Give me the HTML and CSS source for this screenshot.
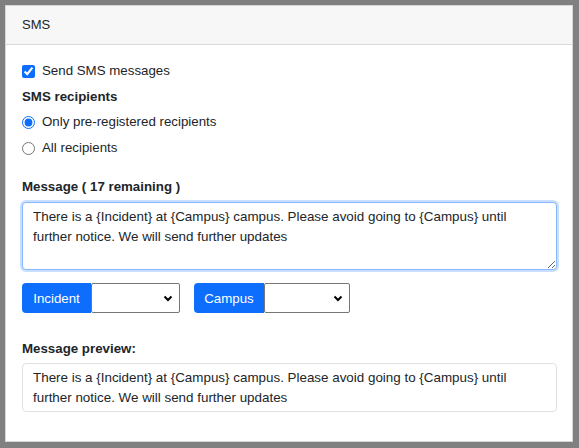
FILE: index.html
```html
<!DOCTYPE html>
<html>
	<head>
		<meta charset="utf-8">
		<title>SMS</title>
		<link rel="stylesheet" href="styles.css">
	</head>
	<body>
		<div class="card">
			<div class="card-header">SMS</div>
			<div class="card-body">
				<label class="check-row">
					<input type="checkbox" checked>
					<span>Send SMS messages</span>
				</label>
				<div class="label label-recipients">SMS recipients</div>
				<label class="check-row radio-first">
					<input type="radio" name="recipients" checked>
					<span>Only pre-registered recipients</span>
				</label>
				<label class="check-row radio-second">
					<input type="radio" name="recipients">
					<span>All recipients</span>
				</label>
				<div class="label label-message">Message ( 17 remaining )</div>
				<!-- textarea shown with the focus style -->
				<textarea class="message active">There is a {Incident} at {Campus} campus. Please avoid going to {Campus} until further notice. We will send further updates</textarea>
				<div class="tags">
					<div class="tag-group">
						<button class="tag-btn">Incident</button>
						<select class="tag-select"><option></option></select>
					</div>
					<div class="tag-group">
						<button class="tag-btn">Campus</button>
						<select class="tag-select"><option></option></select>
					</div>
				</div>
				<div class="label label-preview">Message preview:</div>
				<div class="preview">There is a {Incident} at {Campus} campus. Please avoid going to {Campus} until further notice. We will send further updates</div>
			</div>
		</div>
	</body>
</html>
```

FILE: styles.css
```css
*{
	margin: 0;
	padding: 0;
	box-sizing: border-box;
}
body{
	background-color: #808080;
	padding: 5px 6px 6px 5px;
	font-family: "Liberation Sans", Arial, sans-serif;
	font-size: 13.3px;
	color: #212529;
}
.card{
	background-color: #fff;
	border: 1px solid #d6d6d6;
	height: 437px;
}
.card-header{
	height: 39px;
	line-height: 38px;
	padding: 0 16px;
	background-color: #f7f7f8;
	border-bottom: 1px solid #d9d9d9;
	font-size: 13px;
}
.card-body{
	display: flex;
	flex-direction: column;
	padding: 16px 15px 0 16px;
}
.check-row{
	display: flex;
	align-items: center;
	height: 20px;
	line-height: 20px;
}
.check-row input{
	width: 13px;
	height: 13px;
	margin: 0 7px 0 0;
	accent-color: #0d6efd;
}
.label{
	font-weight: bold;
	height: 20px;
	line-height: 20px;
}
.label-recipients{
	margin-top: 6px;
}
.radio-first{
	margin-top: 5px;
}
.radio-second{
	margin-top: 6px;
}
.label-message{
	margin-top: 19px;
}
.message{
	margin-top: 5px;
	height: 68px;
	padding: 4px 10px;
	font-family: inherit;
	font-size: 13.4px;
	line-height: 19.5px;
	color: #212529;
	border: 1px solid #ced4da;
	border-radius: 4px;
	outline: none;
}
.message.active{
	border-color: #86b7fe;
	box-shadow: 0 0 0 2px rgba(13,110,253,.22);
}
.tags{
	display: flex;
	gap: 14px;
	margin-top: 13px;
}
.tag-group{
	display: flex;
	height: 30px;
}
.tag-btn{
	height: 30px;
	width: 69px;
	border: none;
	border-radius: 4px 0 0 4px;
	background-color: #0d6efd;
	color: #fff;
	font-family: inherit;
	font-size: 13.3px;
}
.tag-group:last-child .tag-btn{
	width: 70px;
}
.tag-select{
	appearance: none;
	-webkit-appearance: none;
	height: 30px;
	width: 89px;
	border: 1px solid #767676;
	border-radius: 2px;
	background: #fff url("data:image/svg+xml,%3Csvg xmlns='http://www.w3.org/2000/svg' width='10' height='7' viewBox='0 0 10 7'%3E%3Cpath d='M1.5 1.5l3.5 3.5 3.5-3.5' fill='none' stroke='%23000' stroke-width='2'/%3E%3C/svg%3E") no-repeat right 6px center;
}
.tag-group:last-child .tag-select{
	width: 86px;
}
.label-preview{
	margin-top: 26px;
}
.preview{
	margin-top: 4px;
	height: 49px;
	padding: 4px 10px;
	font-size: 13.4px;
	line-height: 19.5px;
	border: 1px solid #dee2e6;
	border-radius: 4px;
}
```
